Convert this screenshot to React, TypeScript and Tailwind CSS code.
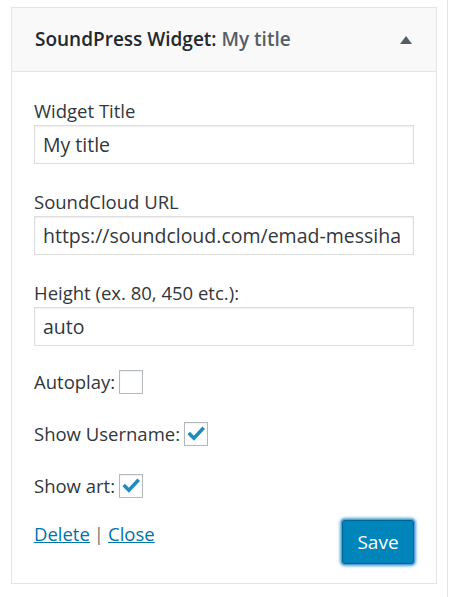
import { useState } from "react";

const font = { fontFamily: '"Open Sans", "Noto Sans", sans-serif' };

function Check({ checked, onClick }: { checked: boolean; onClick: () => void }) {
  return (
    <button
      type="button"
      onClick={onClick}
      className="ml-[4px] flex h-[24px] w-[24px] items-center justify-center border border-[#b4b9be] bg-white shadow-[inset_0_1px_2px_rgba(0,0,0,0.07)]"
    >
      {checked && (
        <svg viewBox="0 0 20 20" className="h-[22px] w-[22px]">
          <path d="M4.5 10.3l3.6 3.6 7.8-8.4" fill="none" stroke="#1e8cbe" strokeWidth="3.2" strokeLinecap="square" />
        </svg>
      )}
    </button>
  );
}

function Field({ label, value }: { label: string; value: string }) {
  return (
    <div className="flex flex-col">
      <label className="text-[18.5px] leading-[24px] text-[#32373c]">{label}</label>
      <div className="mt-[2px] flex h-[39px] w-[380px] items-center overflow-hidden whitespace-nowrap border border-[#ddd] bg-white px-[8px] text-[19.5px] text-[#32373c] shadow-[inset_0_1px_2px_rgba(0,0,0,0.07)]">
        {value}
      </div>
    </div>
  );
}

export default function App() {
  const [autoplay, setAutoplay] = useState(false);
  const [user, setUser] = useState(true);
  const [art, setArt] = useState(true);

  return (
    <div className="min-h-screen w-[452px] bg-white" style={font}>
      <div className="min-h-[597px] w-[448px] border-r border-[#e5e5e5] pt-[7px] pl-[11px]">
        <div className="w-[426px] border border-[#e5e5e5] bg-white">
          {/* header */}
          <div className="flex h-[64px] items-center justify-between border-b border-[#e5e5e5] bg-[#f9f9f9] pl-[23px] pr-[24px]">
            <h3 className="text-[19px] font-semibold text-[#23282d]">
              SoundPress Widget: <span className="text-[#555d66]">My title</span>
            </h3>
            <svg viewBox="0 0 12 8" className="h-[8px] w-[12px]">
              <path d="M0 8L6 0l6 8z" fill="#555d66" />
            </svg>
          </div>

          {/* body */}
          <div className="flex flex-col px-[22px] pt-[27px] pb-[19px]">
            <div className="flex flex-col gap-[26px]">
              <Field label="Widget Title" value="My title" />
              <Field label="SoundCloud URL" value="https://soundcloud.com/emad-messiha" />
              <Field label="Height (ex. 80, 450 etc.):" value="auto" />
            </div>

            <div className="mt-[24px] flex flex-col gap-[28px] text-[18.5px] text-[#32373c]">
              <div className="flex h-[24px] items-center">
                Autoplay:
                <Check checked={autoplay} onClick={() => setAutoplay(!autoplay)} />
              </div>
              <div className="flex h-[24px] items-center">
                Show Username:
                <Check checked={user} onClick={() => setUser(!user)} />
              </div>
              <div className="flex h-[24px] items-center">
                Show art:
                <Check checked={art} onClick={() => setArt(!art)} />
              </div>
            </div>

            <div className="mt-[22px] flex items-start justify-between">
              <div className="text-[18.5px] text-[#32373c]">
                <a href="#" className="text-[#0073aa] underline">Delete</a>
                <span className="mx-[4px] text-[#72777c]">|</span>
                <a href="#" className="text-[#0073aa] underline">Close</a>
              </div>
              <button
                type="button"
                className="h-[44px] w-[72px] rounded-[3px] border border-[#006799] bg-[#0085ba] text-[19px] text-white shadow-[0_0_0_1px_#5b9dd9,0_0_3px_2px_rgba(30,140,190,0.8)]"
              >
                Save
              </button>
            </div>
          </div>
        </div>
      </div>
    </div>
  );
}
